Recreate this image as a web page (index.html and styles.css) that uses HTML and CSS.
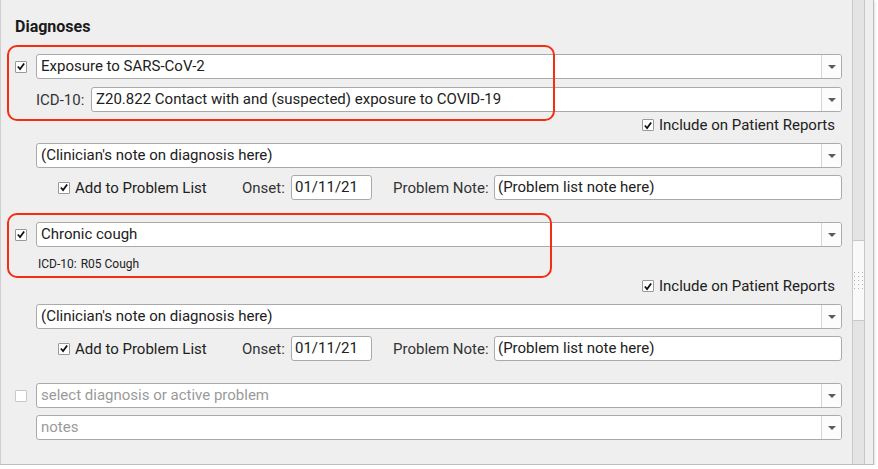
FILE: index.html
```html
<!DOCTYPE html>
<html>
<head>
<meta charset="utf-8">
<link rel="stylesheet" href="styles.css">
</head>
<body>
<div class="panel">
  <div class="content">
    <div class="title">Diagnoses</div>

    <div class="entry first">
      <div class="highlight hl-1"></div>
      <div class="row row-main">
        <span class="cb checked"><svg viewBox="0 0 12 12"><path d="M2.2 6 L4.9 9 L9.8 2.4"/></svg></span>
        <div class="combo"><span class="combo-text">Exposure to SARS-CoV-2</span><span class="combo-btn"><svg viewBox="0 0 8 4"><polygon points="0,0 8,0 4,4"/></svg></span></div>
      </div>
      <div class="row row-icd indent">
        <span class="lbl icd-lbl">ICD-10:</span>
        <div class="combo"><span class="combo-text">Z20.822 Contact with and (suspected) exposure to COVID-19</span><span class="combo-btn"><svg viewBox="0 0 8 4"><polygon points="0,0 8,0 4,4"/></svg></span></div>
      </div>
      <div class="row row-include">
        <span class="cb checked"><svg viewBox="0 0 12 12"><path d="M2.2 6 L4.9 9 L9.8 2.4"/></svg></span>
        <span class="cb-text">Include on Patient Reports</span>
      </div>
      <div class="row row-note indent">
        <div class="combo"><span class="combo-text">(Clinician's note on diagnosis here)</span><span class="combo-btn"><svg viewBox="0 0 8 4"><polygon points="0,0 8,0 4,4"/></svg></span></div>
      </div>
      <div class="row row-problem indent">
        <div class="add-problem">
          <span class="cb checked"><svg viewBox="0 0 12 12"><path d="M2.2 6 L4.9 9 L9.8 2.4"/></svg></span>
          <span class="cb-text">Add to Problem List</span>
        </div>
        <span class="lbl onset-lbl">Onset:</span>
        <div class="field date-field">01/11/21</div>
        <span class="lbl pnote-lbl">Problem Note:</span>
        <div class="field pnote-field">(Problem list note here)</div>
      </div>
    </div>

    <div class="entry">
      <div class="highlight hl-2"></div>
      <div class="row row-main">
        <span class="cb checked"><svg viewBox="0 0 12 12"><path d="M2.2 6 L4.9 9 L9.8 2.4"/></svg></span>
        <div class="combo"><span class="combo-text">Chronic cough</span><span class="combo-btn"><svg viewBox="0 0 8 4"><polygon points="0,0 8,0 4,4"/></svg></span></div>
      </div>
      <div class="row row-icd-small">
        <span class="small-lbl">ICD-10:</span><span>R05 Cough</span>
      </div>
      <div class="row row-include row-include-2">
        <span class="cb checked"><svg viewBox="0 0 12 12"><path d="M2.2 6 L4.9 9 L9.8 2.4"/></svg></span>
        <span class="cb-text">Include on Patient Reports</span>
      </div>
      <div class="row row-note indent">
        <div class="combo"><span class="combo-text">(Clinician's note on diagnosis here)</span><span class="combo-btn"><svg viewBox="0 0 8 4"><polygon points="0,0 8,0 4,4"/></svg></span></div>
      </div>
      <div class="row row-problem indent">
        <div class="add-problem">
          <span class="cb checked"><svg viewBox="0 0 12 12"><path d="M2.2 6 L4.9 9 L9.8 2.4"/></svg></span>
          <span class="cb-text">Add to Problem List</span>
        </div>
        <span class="lbl onset-lbl">Onset:</span>
        <div class="field date-field">01/11/21</div>
        <span class="lbl pnote-lbl">Problem Note:</span>
        <div class="field pnote-field">(Problem list note here)</div>
      </div>
    </div>

    <div class="entry">
      <div class="row row-main">
        <span class="cb empty"></span>
        <div class="combo"><span class="combo-text placeholder">select diagnosis or active problem</span><span class="combo-btn"><svg viewBox="0 0 8 4"><polygon points="0,0 8,0 4,4"/></svg></span></div>
      </div>
      <div class="row row-notes indent">
        <div class="combo"><span class="combo-text placeholder">notes</span><span class="combo-btn"><svg viewBox="0 0 8 4"><polygon points="0,0 8,0 4,4"/></svg></span></div>
      </div>
    </div>
  </div>

  <div class="scrollbar">
    <div class="thumb">
      <svg class="grip" viewBox="0 0 10 18">
        <rect x="0" y="0" width="1" height="1"/><rect x="4" y="0" width="1" height="1"/><rect x="8" y="0" width="1" height="1"/>
        <rect x="0" y="4" width="1" height="1"/><rect x="4" y="4" width="1" height="1"/><rect x="8" y="4" width="1" height="1"/>
        <rect x="0" y="8" width="1" height="1"/><rect x="4" y="8" width="1" height="1"/><rect x="8" y="8" width="1" height="1"/>
        <rect x="0" y="12" width="1" height="1"/><rect x="4" y="12" width="1" height="1"/><rect x="8" y="12" width="1" height="1"/>
        <rect x="0" y="16" width="1" height="1"/><rect x="4" y="16" width="1" height="1"/><rect x="8" y="16" width="1" height="1"/>
      </svg>
    </div>
  </div>
</div>
</body>
</html>
```

FILE: styles.css
```css
* { box-sizing: border-box; }

html, body {
  margin: 0;
  padding: 0;
  background: #ffffff;
}

body {
  font-family: Roboto, "Liberation Sans", Arial, sans-serif;
  color: #212121;
  font-size: 15px;
}

.panel {
  display: flex;
  width: 874px;
  height: 465px;
  background: #efefef;
  border-left: 1px solid #cfcfcf;
  border-right: 1px solid #bdbdbd;
  border-bottom: 1px solid #bdbdbd;
  box-shadow: 1px 1px 2px rgba(0,0,0,0.12);
}

.content {
  flex: 1;
  padding: 0 10px 0 14px;
}

.title {
  padding-top: 17px;
  font-size: 16px;
  line-height: 20px;
  font-weight: 700;
  color: #1a1a1a;
}

.entry {
  position: relative;
  margin-top: 22px;
}

.entry.first {
  margin-top: 17px;
}

.highlight {
  position: absolute;
  left: -8px;
  top: -9px;
  border: 2px solid #f52d12;
  border-radius: 10px;
  pointer-events: none;
}

.hl-1 { width: 548px; height: 76px; }
.hl-2 { width: 545px; height: 65px; }

.row {
  display: flex;
  align-items: center;
}

.indent {
  padding-left: 21px;
}

.row-main { height: 25px; }

.row-icd { margin-top: 8px; height: 25px; }

.row-include {
  margin-top: 4px;
  height: 18px;
  justify-content: flex-end;
  padding-right: 7px;
}

.row-include-2 { margin-top: 5px; }

.row-note { margin-top: 9px; height: 25px; }

.row-problem { margin-top: 7px; height: 25px; }

.row-notes { margin-top: 7px; height: 25px; }

.row-icd-small {
  margin-top: 9px;
  height: 16px;
  padding-left: 23px;
  font-size: 12px;
  line-height: 16px;
  color: #222;
}

.small-lbl { margin-right: 4px; }

.cb {
  width: 12px;
  height: 12px;
  flex: none;
  background: #fff;
  border: 1px solid #9a9a9a;
  border-radius: 1px;
  display: flex;
  align-items: center;
  justify-content: center;
}

.cb svg {
  width: 11px;
  height: 11px;
}

.cb svg path {
  fill: none;
  stroke: #111;
  stroke-width: 2.1;
}

.cb.empty {
  border-color: #c9c9c9;
}

.row-main .cb {
  margin-right: 9px;
}

.cb-text {
  margin-left: 5px;
  line-height: 18px;
}

.combo {
  flex: 1;
  display: flex;
  height: 25px;
  background: #fff;
  border: 1px solid #aaaaaa;
  border-radius: 3px;
  min-width: 0;
}

.combo-text {
  flex: 1;
  padding-left: 4px;
  line-height: 23px;
  white-space: nowrap;
  overflow: hidden;
}

.placeholder { color: #9a9a9a; }

.combo-btn {
  width: 20px;
  flex: none;
  border-left: 1px solid #d6d6d6;
  background: #fcfcfc;
  border-radius: 0 2px 2px 0;
  display: flex;
  align-items: center;
  justify-content: center;
}

.combo-btn svg {
  width: 8px;
  height: 4px;
  fill: #5a5a5a;
}

.lbl {
  color: #333;
  white-space: nowrap;
}

.icd-lbl { width: 55px; flex: none; }

.add-problem {
  display: flex;
  align-items: center;
  width: 206px;
  padding-left: 22px;
  flex: none;
}

.onset-lbl { width: 49px; flex: none; }

.field {
  height: 25px;
  background: #fff;
  border: 1px solid #aaaaaa;
  border-radius: 3px;
  line-height: 23px;
  padding-left: 3px;
  white-space: nowrap;
}

.date-field { width: 81px; flex: none; }

.pnote-lbl { margin-left: 21px; width: 101px; flex: none; }

.pnote-field { flex: 1; }

.scrollbar {
  width: 13px;
  flex: none;
  margin-right: 8px;
  background: #e4e4e4;
  border-left: 1px solid #c8c8c8;
  border-right: 1px solid #c8c8c8;
}

.thumb {
  margin-top: 240px;
  height: 81px;
  background: #f9f9f9;
  border-top: 1px solid #c8c8c8;
  border-bottom: 1px solid #c8c8c8;
  display: flex;
  align-items: center;
  justify-content: center;
}

.grip {
  width: 10px;
  height: 18px;
  fill: #b4b4b4;
}
```
